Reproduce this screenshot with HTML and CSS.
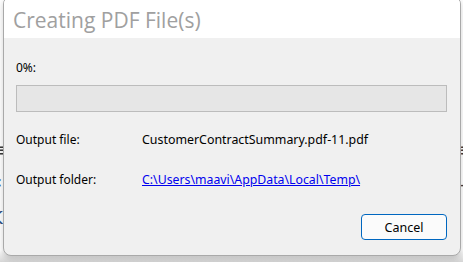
FILE: index.html
```html
<!DOCTYPE html>
<html>
<head>
<meta charset="utf-8">
<link rel="stylesheet" href="styles.css">
</head>
<body>
<div class="backdrop">
  <span class="bg-glyph g1">≡</span>
  <span class="bg-glyph g2">‹</span>
  <span class="bg-glyph g3">K</span>
  <span class="bg-glyph g4">≡</span>
  <span class="bg-glyph g5">-</span>
</div>
<div class="dialog">
  <div class="title-bar">
    <span class="title">Creating PDF File(s)</span>
  </div>
  <div class="content">
    <div class="progress-label">0%:</div>
    <div class="progress"></div>
    <div class="info">
      <span class="label">Output file:</span>
      <span class="value file">CustomerContractSummary.pdf-11.pdf</span>
      <span class="label">Output folder:</span>
      <a class="value link" href="#">C:\Users\maavi\AppData\Local\Temp\</a>
    </div>
    <div class="actions">
      <button class="btn">Cancel</button>
    </div>
  </div>
</div>
</body>
</html>
```

FILE: styles.css
```css
html, body {
  margin: 0;
  padding: 0;
}
body {
  width: 463px;
  height: 262px;
  overflow: hidden;
  background: #e4e4e4;
  position: relative;
  font-family: "Noto Sans", "Open Sans", sans-serif;
}
.backdrop {
  position: absolute;
  inset: 0;
  background: linear-gradient(to bottom, #ffffff 0, #ffffff 250px, #d6d6d6 262px);
}
.bg-glyph {
  position: absolute;
  font-family: "DejaVu Sans", sans-serif;
  color: #3a3a3a;
  font-size: 18px;
  line-height: 20px;
}
.g1 { left: -7px; top: 140px; }
.g2 { left: -5px; top: 172px; color: #2f4f80; }
.g3 { left: -9px; top: 208px; color: #2f4f80; }
.g4 { left: 459px; top: 140px; }
.g5 { left: 460px; top: 174px; }
.dialog {
  position: relative;
  margin-top: -4px;
  margin-left: 3px;
  width: 456px;
  height: 258px;
  border: 1px solid #a9a9a9;
  border-radius: 8px;
  background: #f0f0f0;
  box-shadow: 0 3px 6px rgba(0,0,0,0.18);
  overflow: hidden;
  display: flex;
  flex-direction: column;
}
.title-bar {
  height: 41px;
  background: #ffffff;
  display: flex;
  align-items: center;
  padding-left: 9px;
  box-sizing: border-box;
  padding-top: 4px;
}
.title {
  font-family: "Open Sans", sans-serif;
  font-size: 21px;
  color: #a0a0a0;
}
.content {
  flex: 1;
  padding: 0 13px 0 12px;
  display: flex;
  flex-direction: column;
  font-size: 12px;
  color: #000;
}
.progress-label {
  margin-top: 22px;
  line-height: 16px;
}
.progress {
  margin-top: 9px;
  height: 25px;
  background: #e6e6e6;
  border: 1px solid #bcbcbc;
}
.info {
  margin-top: 20px;
  display: grid;
  grid-template-columns: 126px auto;
  row-gap: 24px;
  line-height: 16px;
  justify-items: start;
}
.file {
  font-size: 12.4px;
}
.link {
  color: #0000ee;
  text-decoration: underline;
  font-size: 12.3px;
}
.actions {
  margin-top: 26px;
  display: flex;
  justify-content: flex-end;
}
.btn {
  width: 86px;
  height: 26px;
  border: 1px solid #0067c0;
  border-radius: 4px;
  background: #fbfbfb;
  font-family: "Noto Sans", sans-serif;
  font-size: 12.5px;
  color: #000;
  padding: 0;
}
```
